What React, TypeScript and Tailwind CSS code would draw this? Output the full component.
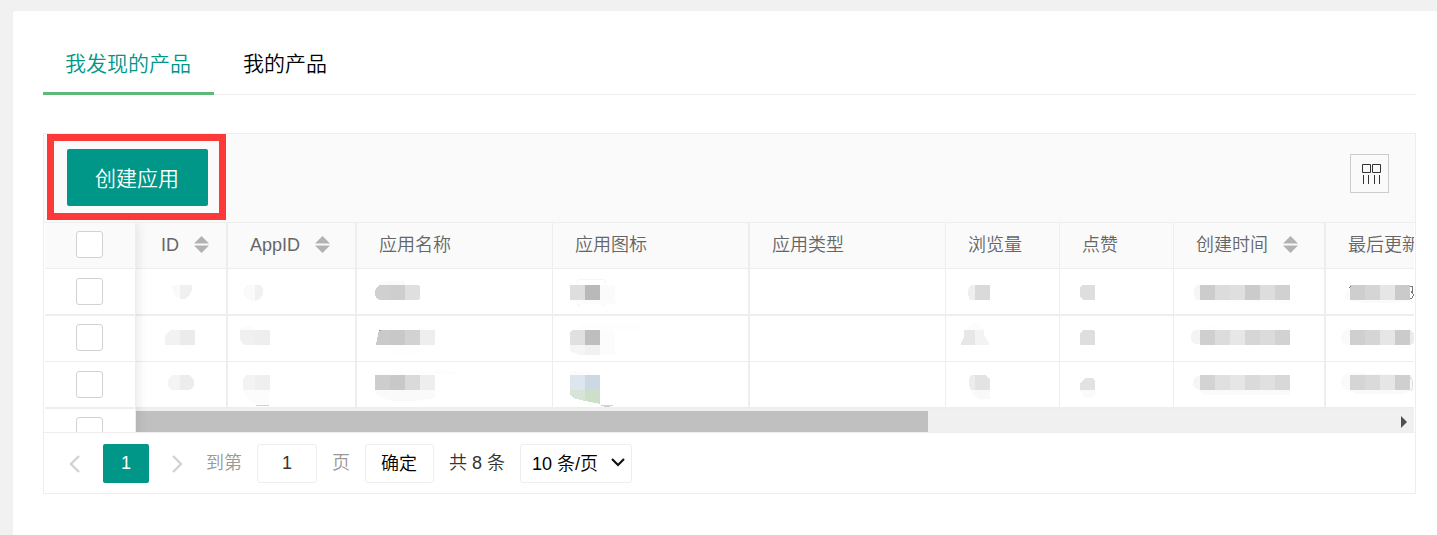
import { useState } from "react";
import clsx from "clsx";

type Shape = { d: string; fill?: string; stroke?: string };

type Column = {
  title: string;
  sortable?: boolean;
  width: string;
};

const columns: Column[] = [
  { title: "ID", sortable: true, width: "w-[92px]" },
  { title: "AppID", sortable: true, width: "w-[129px]" },
  { title: "应用名称", width: "w-[196px]" },
  { title: "应用图标", width: "w-[197px]" },
  { title: "应用类型", width: "w-[196px]" },
  { title: "浏览量", width: "w-[114px]" },
  { title: "点赞", width: "w-[114px]" },
  { title: "创建时间", sortable: true, width: "w-[152px]" },
  { title: "最后更新", sortable: true, width: "w-[200px]" },
];

// a run of 15px mosaic tiles starting at x, y
const tiles = (x: number, y: number, fills: string[], h = 15): Shape[] =>
  fills.map((fill, i) => ({ d: `M${x + i * 15} ${y}h15v${h}h-15z`, fill }));

// masked cell contents, one entry per column
const rows: Shape[][][] = [
  [
    [
      { d: "M36 16h8v14q-7-2-8-14z", fill: "#fafafa" },
      { d: "M44 16h12v5q-3 9-9 9h-3z", fill: "#f0f0f0" },
    ],
    [
      { d: "M27 16h-8q-4 3-4 7t5 7q3 2 7 2z", fill: "#fafafa" },
      { d: "M27 16h6q2 3 2 7t-4 7l-4 2z", fill: "#f1f1f1" },
    ],
    [
      { d: "M21 16v-2l9-2h18v4z", fill: "#fafafa" },
      { d: "M33 16H23q-5 2-5 8t5 7h10z", fill: "#d0d0d0" },
      { d: "M33 16h15v15H33z", fill: "#cecece" },
      { d: "M48 16h13l2 2v11l-2 2H48z", fill: "#dfdfdf" },
    ],
    [
      { d: "M23 15q2-5 5-5h20q4 0 5 5M23 32q2 5 5 5M48 37q4 0 5-5", stroke: "#f6f6f6" },
      { d: "M17 31h45l3 1-2 3H32z", fill: "#fcfcfc" },
      ...tiles(17, 16, ["#dedede", "#b9b9bb", "#fbfbfc"]),
    ],
    [],
    [
      { d: "M29 16h-4q-3 3-3 8t3 7h4z", fill: "#efefef" },
      { d: "M29 16h15v15H29z", fill: "#dadada" },
    ],
    [{ d: "M22 16h13v15H23l-3-3v-10z", fill: "#dedede" }],
    [
      { d: "M26 16h-3q-3 3-3 8t3 7h3z", fill: "#f5f5f5" },
      { d: "M26 31h103l-5 3H60z", fill: "#fdfdfd" },
      ...tiles(26, 16, ["#cccccc", "#dcdcdc", "#dfdfdf", "#cbcbcb", "#dddddd", "#d1d1d1"]),
    ],
    [
      { d: "M24 18q-4 5-5 9t5 4l12 3h34l14-3V18z", fill: "#fbfbfb" },
      ...tiles(24, 16, ["#cecece", "#d5d5d5", "#e6e6e6", "#cacaca"]),
      { d: "M23 19l2-2M84 17q3 0 3 3t-2 3q3 1 2 4t-3 2", stroke: "#777777" },
    ],
  ],
  [
    [
      { d: "M44 14h-9l-6 5v10h15z", fill: "#f2f2f2" },
      { d: "M44 14h15v15H44z", fill: "#ebebeb" },
    ],
    [
      { d: "M11 14q3-4 9-4t7 4z", fill: "#fcfcfc" },
      { d: "M27 14H12v9q1 4 5 6h10z", fill: "#f0f0f0" },
      { d: "M27 14h15v15H27z", fill: "#eeeeee" },
    ],
    [
      { d: "M24 14l8-2h54l-6 2zM20 29h43v9H32z", fill: "#fefefe" },
      { d: "M33 14H22l-3 15h14z", fill: "#cacaca" },
      ...tiles(33, 14, ["#c8c8c8", "#d2d2d2", "#eeeeee"]),
      { d: "M22 14h2", stroke: "#999999" },
    ],
    [
      { d: "M22 13l10-6h50q6 2 7 6z", fill: "#fdfdfd" },
      { d: "M32 14H19l-2 3v12h15z", fill: "#e0e0e0" },
      { d: "M32 14h15v15H32z", fill: "#bebec0" },
      { d: "M47 14h15v25H47z", fill: "#fcfcfc" },
      { d: "M17 29h15v10h-6l-9-4z", fill: "#f5f5f5" },
      { d: "M32 29h15v10H32z", fill: "#f1f1f1" },
    ],
    [],
    [
      { d: "M20 14q4-7 9-7t9 7z", fill: "#fcfcfc" },
      { d: "M29 14H18v7l-3 6v2h14z", fill: "#e7e7e7" },
      { d: "M29 14h9v6q5 4 5 9H29z", fill: "#f3f3f3" },
    ],
    [{ d: "M23 14h10l2 2v13H20V17z", fill: "#dedede" }],
    [
      { d: "M26 14h-6q-3 2-3 7t4 7h5z", fill: "#f4f4f4" },
      { d: "M20 14l8-3h16l5 3z", fill: "#fdfdfd" },
      ...tiles(26, 14, ["#cfcfcf", "#dcdcdc", "#e7e7e7", "#d6d6d6", "#dbdbdb", "#d2d2d2"]),
    ],
    [
      { d: "M24 13q-8 0-9 8t9 8z", fill: "#fafafa" },
      ...tiles(24, 14, ["#cfcfcf", "#d5d5d5", "#e6e6e6", "#cbcbcb"]),
      { d: "M84 14l4 3v10l-4 2z", fill: "#ececec" },
    ],
  ],
  [
    [
      { d: "M44 13h-7q-5 2-5 8t5 7h7z", fill: "#f4f4f4" },
      { d: "M44 13h9q5 2 5 8t-5 7h-9z", fill: "#ececec" },
    ],
    [
      { d: "M27 13h-8q-4 2-4 6v9h12z", fill: "#f3f3f3" },
      { d: "M27 13h15v15H27z", fill: "#efefef" },
      { d: "M15 28h27v14H27q-9-5-12-14z", fill: "#fcfcfc" },
      { d: "M28 43.5h13", stroke: "#d0d0d0" },
    ],
    [
      { d: "M15 13q2-4 7-4h70q8 1 10 3z", fill: "#fdfdfd" },
      { d: "M18 28h60v8l-20 3H38q-18-2-20-11z", fill: "#fafafa" },
      ...tiles(18, 13, ["#cdcdcd", "#c8c8c8", "#dadada", "#eeeeee"]),
    ],
    [
      { d: "M17 13v-4h15l13 4z", fill: "#fcfcfc" },
      ...tiles(17, 13, ["#dde6ee", "#ccd8e2"]),
      { d: "M17 28h15v11l-12-3-3-3z", fill: "#d8e4d8" },
      { d: "M32 28h15v14l-15-3z", fill: "#cbdfc9" },
      { d: "M48 43.5h12M51 44.5h6", stroke: "#d0d0d0" },
    ],
    [],
    [
      { d: "M29 13h-4q-3 5-2 10l2 5h4z", fill: "#ececec" },
      { d: "M29 13h10l5 4v11H29z", fill: "#e3e3e3" },
      { d: "M25 28h19v9H33q-6-3-8-9z", fill: "#f9f9f9" },
    ],
    [
      { d: "M20 28v-6l5-6h7l3 2v10z", fill: "#e2e2e2" },
      { d: "M20 28h15v6l-4 2h-6z", fill: "#fafafa" },
    ],
    [
      { d: "M26 13q-7 2-7 8t7 7z", fill: "#f6f6f6" },
      { d: "M26 28h90v5H30z", fill: "#fafafa" },
      ...tiles(26, 13, ["#d3d3d3", "#e0e0e0", "#e6e6e6", "#dadada", "#e0e0e0", "#d8d8d8"]),
    ],
    [
      { d: "M24 11q-9 1-9 9t9 8l6 4h48l8-4V13z", fill: "#fafafa" },
      ...tiles(24, 13, ["#d5d5d5", "#dadada", "#e6e6e6", "#cfcfcf"]),
      { d: "M84 15q3 3 3 7t-2 7", stroke: "#e0e0e0" },
    ],
  ],
];

function Masked({ shapes }: { shapes: Shape[] }) {
  return (
    <svg className="block h-[45px] w-full" aria-hidden="true">
      {shapes.map((s, i) => (
        <path key={i} d={s.d} fill={s.fill ?? "none"} stroke={s.stroke} shapeRendering="crispEdges" />
      ))}
    </svg>
  );
}

function SortIcon() {
  return (
    <svg className="mb-0.5" width="15" height="17" viewBox="0 0 15 17" fill="#b2b2b2" aria-hidden="true">
      <path d="M0 7.5L7.5 0L15 7.5z" />
      <path d="M0 9.5h15L7.5 17z" />
    </svg>
  );
}

function Check({ label }: { label: string }) {
  return (
    <input
      type="checkbox"
      aria-label={label}
      className="mx-auto block size-[27px] appearance-none rounded-[3px] border border-[#d2d2d2] bg-white checked:border-[#5FB878] checked:bg-[#5FB878]"
    />
  );
}

export default function App() {
  const [tab, setTab] = useState(0);
  const [page, setPage] = useState("1");

  return (
    <div className="min-h-screen bg-[#f1f1f1] pt-[11px] pl-[13px] font-['Liberation_Sans','Noto_Sans_CJK_SC',sans-serif] font-[350] text-[#333]">
      <div className="min-h-[524px] rounded-tl-[3px] bg-white pt-6 pr-[21px] pl-[30px]">
        {/* Tabs */}
        <div role="tablist" className="flex h-[60px] gap-[7px] border-b border-[#eee]">
          {["我发现的产品", "我的产品"].map((name, i) => (
            <button
              key={name}
              type="button"
              role="tab"
              aria-selected={tab === i}
              onClick={() => setTab(i)}
              className={clsx(
                "-mb-px border-b-3 pr-[23px] pl-[22px] text-[21px]",
                tab === i ? "border-[#5FB878] text-[#009688]" : "border-transparent text-black"
              )}
            >
              {name}
            </button>
          ))}
        </div>

        <div className="mt-[38px] border border-[#eee]">
          {/* Toolbar */}
          <div className="flex items-start justify-between border-b border-[#eee] bg-[#fafafa] pt-[15px] pr-[26px] pb-4 pl-[23px]">
            <div className="relative">
              <button
                type="button"
                className="block h-[57px] rounded-[2px] bg-[#009688] pt-[3px] pr-[29px] pl-7 text-[21px] text-white"
              >
                创建应用
              </button>
              <div className="pointer-events-none absolute -top-[15px] -right-[18px] -bottom-[14px] -left-5 border-7 border-[#fc3838]" />
            </div>
            <button type="button" aria-label="筛选列" className="mt-[5px] size-[39px] border border-[#ccc]">
              <svg width="37" height="37" viewBox="0 0 37 37" fill="none" stroke="#333" aria-hidden="true">
                <path d="M11.5 9.5h8v8h-8zM21.5 9.5h8v8h-8z" />
                <path d="M12.5 20v9M17.5 20v9M23.5 20v9M28.5 20v9" />
              </svg>
            </button>
          </div>

          {/* Table */}
          <div className="mx-px flex h-[209px] overflow-hidden">
            <div className="relative z-10 w-[91px] shrink-0 self-start border-r border-[#eee] bg-white shadow-[0_-1px_12px_rgba(0,0,0,0.12)]">
              <table className="w-full border-separate border-spacing-0">
                <thead>
                  <tr>
                    <th className="h-[46px] border-b border-[#eee] bg-[#fafafa] pt-0 pr-0.5 pb-0.5 pl-0">
                      <Check label="全选" />
                    </th>
                  </tr>
                </thead>
                <tbody>
                  {[1, 2, 3, 4].map((n) => (
                    <tr key={n} className="group">
                      <td className="border-[#eee] pt-0 pr-0.5 pl-0 group-odd:h-[47px] group-odd:border-b-2 group-odd:pb-0 group-even:h-[46px] group-even:border-b group-even:pb-0.5">
                        <Check label={`选择第 ${n} 行`} />
                      </td>
                    </tr>
                  ))}
                </tbody>
              </table>
            </div>

            <div className="min-w-0 flex-1 overflow-hidden">
              <table className="w-[1390px] table-fixed border-separate border-spacing-0">
                <thead>
                  <tr>
                    {columns.map((col, i) => (
                      <th
                        key={col.title}
                        className={clsx(
                          "h-[46px] border-b border-[#eee] bg-[#fafafa] py-0 pr-0 text-left text-[18px] font-[350] whitespace-nowrap text-[#666]",
                          col.width,
                          i === 0 ? "pl-[25px]" : "pl-[22px]",
                          [0, 1, 3, 7].includes(i) ? "border-r-2" : "border-r"
                        )}
                      >
                        <span className="flex items-center gap-[15px]">
                          {col.title}
                          {col.sortable && <SortIcon />}
                        </span>
                      </th>
                    ))}
                  </tr>
                </thead>
                <tbody>
                  {rows.map((cells, r) => (
                    <tr key={r} className="group">
                      {cells.map((shapes, i) => (
                        <td
                          key={i}
                          className={clsx(
                            "border-[#eee] p-0 align-top group-odd:h-[47px] group-odd:border-b-2 group-even:h-[46px] group-even:border-b",
                            [0, 1, 3, 7].includes(i) ? "border-r-2" : "border-r"
                          )}
                        >
                          <Masked shapes={shapes} />
                        </td>
                      ))}
                    </tr>
                  ))}
                </tbody>
              </table>
              {/* Horizontal scrollbar */}
              <div className="flex h-[23px] items-center justify-between bg-[#f0f0f0] pt-[2px] pr-[7px]">
                <div className="h-full w-[62.3%] bg-[#c0c0c0]" />
                <svg width="6" height="12" viewBox="0 0 6 12" fill="#505050" aria-hidden="true">
                  <path d="M0 0l6 6l-6 6z" />
                </svg>
              </div>
            </div>
          </div>

          {/* Pagination */}
          <div className="flex items-center gap-[15px] border-t border-[#eee] pt-[11px] pb-[10px] pl-[25px] text-[18px]">
            <div className="mr-2 flex items-center gap-[23px]">
              <button type="button" aria-label="上一页">
                <svg width="11" height="18" viewBox="0 0 11 18" fill="none" stroke="#d2d2d2" strokeWidth="2.4" aria-hidden="true">
                  <path d="M10 1L2 9l8 8" />
                </svg>
              </button>
              <button type="button" aria-current="page" className="h-[39px] w-[46px] rounded-[2px] bg-[#009688] text-white">
                1
              </button>
              <button type="button" aria-label="下一页">
                <svg width="11" height="18" viewBox="0 0 11 18" fill="none" stroke="#d2d2d2" strokeWidth="2.4" aria-hidden="true">
                  <path d="M1 1l8 8l-8 8" />
                </svg>
              </button>
            </div>
            <label htmlFor="page" className="text-[#999]">
              到第
            </label>
            <input
              id="page"
              type="text"
              value={page}
              onChange={(e) => setPage(e.target.value)}
              className="h-[39px] w-[60px] rounded-[3px] border border-[#eee] text-center text-[#333]"
            />
            <span className="text-[#999]">页</span>
            <button type="button" className="h-[39px] rounded-[3px] border border-[#eee] pt-0.5 pr-4 pl-[15px] text-black">
              确定
            </button>
            <span>共 8 条</span>
            <div className="relative">
              <select
                aria-label="每页条数"
                className="block h-[39px] w-[112px] appearance-none rounded-[3px] border border-[#eee] bg-white pt-0.5 pl-[11px] text-black"
              >
                <option>10 条/页</option>
                <option>20 条/页</option>
                <option>30 条/页</option>
              </select>
              <svg
                className="pointer-events-none absolute top-[14px] right-[7px]"
                width="14"
                height="9"
                viewBox="0 0 14 9"
                fill="none"
                stroke="#111"
                strokeWidth="2.2"
                aria-hidden="true"
              >
                <path d="M1 1l6 6l6-6" />
              </svg>
            </div>
          </div>
        </div>
      </div>
    </div>
  );
}
